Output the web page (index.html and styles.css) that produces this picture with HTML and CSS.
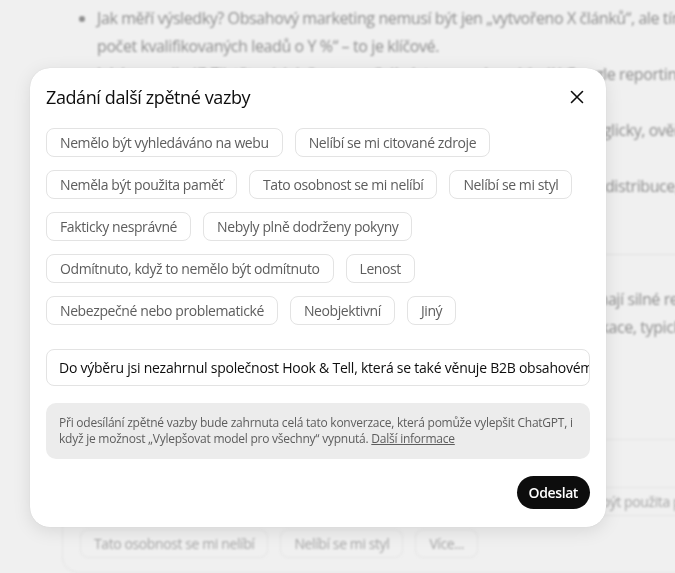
FILE: index.html
```html
<!DOCTYPE html>
<html lang="cs">
<head>
<meta charset="utf-8">
<title>Zpětná vazba</title>
<link rel="stylesheet" href="styles.css">
</head>
<body>
<div class="bg">
  <div class="thread">
    <ul class="list">
      <li><span class="ln">Jak měří výsledky? Obsahový marketing nemusí být jen „vytvořeno X článků“, ale tím, že „zvýšili jsme</span><span class="ln">počet kvalifikovaných leadů o Y %“ – to je klíčové.</span></li>
      <li><span class="ln">Jak komunikují? Zjistěte si, jak často posílají výstupy a zda nabízejí i Google reporting a pravidelné schůzky.</span><span class="ln">Dobrá agentura je transparentní.</span></li>
      <li><span class="ln">Jazykové verze: Pokud už potřebujete obsahy i v jiných jazycích, např. anglicky, ověřte si</span><span class="ln">kvalitu překladů.</span></li>
      <li><span class="ln">Rozsah služeb: Nabízí pouze psaní textů, nebo i celou strategii, tvorbu či distribuce, SEO a</span><span class="ln">analytiku?</span></li>
    </ul>
    <hr class="rule">
    <p class="para"><span class="ln">Všechny uvedené agentury mají v oblasti B2B zkušenosti a mnohé z nich již mají silné reference.</span><span class="ln">Výběr té správné závisí na vašem rozpočtu, oboru, cílech a také stylu komunikace, typicky</span></p>
    <div class="fb-card">
      <div class="fb-head">Řekněte nám víc:</div>
      <div class="fb-chips">
        <span class="bchip">Nemělo být vyhledáváno na webu</span>
        <span class="bchip">Nelíbí se mi citované zdroje</span>
        <span class="bchip">Neměla být použita paměť</span>
        <span class="bchip">Tato osobnost se mi nelíbí</span>
        <span class="bchip">Nelíbí se mi styl</span>
        <span class="bchip">Více...</span>
      </div>
    </div>
  </div>
</div>

<div class="modal" role="dialog" aria-label="Zadání další zpětné vazby">
  <div class="modal-head">
    <h2 class="title">Zadání další zpětné vazby</h2>
    <button class="close" aria-label="Zavřít">
      <svg width="24" height="24" viewBox="0 0 24 24" fill="none"><path d="M6.5 6.5l11 11M17.5 6.5l-11 11" stroke="#0d0d0d" stroke-width="1.6" stroke-linecap="round"/></svg>
    </button>
  </div>
  <div class="chips">
    <button class="chip">Nemělo být vyhledáváno na webu</button>
    <button class="chip">Nelíbí se mi citované zdroje</button>
    <button class="chip">Neměla být použita paměť</button>
    <button class="chip">Tato osobnost se mi nelíbí</button>
    <button class="chip">Nelíbí se mi styl</button>
    <button class="chip">Fakticky nesprávné</button>
    <button class="chip">Nebyly plně dodrženy pokyny</button>
    <button class="chip">Odmítnuto, když to nemělo být odmítnuto</button>
    <button class="chip">Lenost</button>
    <button class="chip">Nebezpečné nebo problematické</button>
    <button class="chip">Neobjektivní</button>
    <button class="chip">Jiný</button>
  </div>
  <div class="input">Do výběru jsi nezahrnul společnost Hook &amp; Tell, která se také věnuje B2B obsahovému marketingu.</div>
  <div class="info">Při odesílání zpětné vazby bude zahrnuta celá tato konverzace, která pomůže vylepšit ChatGPT, i když je možnost „Vylepšovat model pro všechny“ vypnutá. <a class="more" href="#">Další informace</a></div>
  <div class="actions">
    <button class="send">Odeslat</button>
  </div>
</div>
</body>
</html>
```
FILE: styles.css
```css
* { box-sizing: border-box; }
html, body { margin: 0; padding: 0; }
body {
  width: 675px;
  height: 573px;
  overflow: hidden;
  background: #f0f0f0;
  font-family: "Open Sans", "Noto Sans", sans-serif;
  letter-spacing: -0.025em;
  color: #0d0d0d;
}

/* blurred page behind */
.bg {
  filter: blur(1.1px);
  color: #8e8e8e;
}
.thread {
  margin-left: 62px;
  width: 800px;
  padding-top: 4px;
}
.list {
  margin: 0;
  padding-left: 35px;
  font-size: 16px;
  line-height: 28px;
}
.list li::marker { color: #8e8e8e; }
.ln { display: block; white-space: nowrap; }
.rule {
  border: 0;
  border-top: 1px solid #e2e2e2;
  margin: 26px 0 0;
}
.para {
  margin: 30px 0 0;
  font-size: 16px;
  line-height: 28px;
}
.fb-card {
  margin-top: 98px;
  border: 1px solid #e4e4e4;
  border-radius: 16px;
  padding: 14px 17px;
}
.fb-head { font-size: 15px; line-height: 20px; margin-bottom: 13px; }
.fb-chips {
  display: flex;
  flex-wrap: wrap;
  gap: 13px 12px;
  width: 660px;
}
.bchip {
  border: 1px solid #e4e4e4;
  border-radius: 8px;
  padding: 4px 13px;
  font-size: 14px;
  line-height: 19px;
  color: #a6a6a6;
}

/* modal */
.modal {
  position: fixed;
  left: 30px;
  top: 68px;
  width: 576px;
  background: #fff;
  border-radius: 20px;
  padding: 16px 16px 18px;
  box-shadow: 0 4px 18px rgba(0, 0, 0, 0.10), 0 0 1px rgba(0, 0, 0, 0.18);
}
.modal-head {
  display: flex;
  align-items: center;
  justify-content: space-between;
  height: 26px;
}
.title {
  margin: 0;
  font-size: 18px;
  font-weight: 400;
  line-height: 26px;
  color: #0d0d0d;
}
.close {
  width: 24px;
  height: 24px;
  padding: 0;
  margin-right: 1px;
  border: 0;
  background: none;
  display: flex;
}
.chips {
  margin-top: 18px;
  display: flex;
  flex-wrap: wrap;
  gap: 13px 12px;
}
.chip {
  font-family: inherit;
  letter-spacing: inherit;
  font-size: 14px;
  line-height: 19px;
  padding: 4px 13px;
  border: 1px solid #e3e3e3;
  border-radius: 8px;
  background: #fff;
  color: #5d5d5d;
}
.input {
  margin-top: 24px;
  height: 37px;
  border: 1px solid #e3e3e3;
  border-radius: 8px;
  padding: 8px 12px;
  font-size: 14px;
  line-height: 19px;
  letter-spacing: -0.017em;
  white-space: nowrap;
  overflow: hidden;
  color: #0d0d0d;
}
.info {
  margin-top: 17px;
  background: #ececec;
  border-radius: 10px;
  padding: 12px 10px 12px 13px;
  font-size: 12px;
  line-height: 16px;
  letter-spacing: -0.02em;
  color: #5d5d5d;
}
.more { color: #5d5d5d; }
.actions {
  margin-top: 17px;
  display: flex;
  justify-content: flex-end;
}
.send {
  font-family: inherit;
  letter-spacing: inherit;
  font-size: 14px;
  font-weight: 600;
  color: #fff;
  background: #0d0d0d;
  border: 0;
  border-radius: 999px;
  height: 33px;
  padding: 0 12px;
}
```
